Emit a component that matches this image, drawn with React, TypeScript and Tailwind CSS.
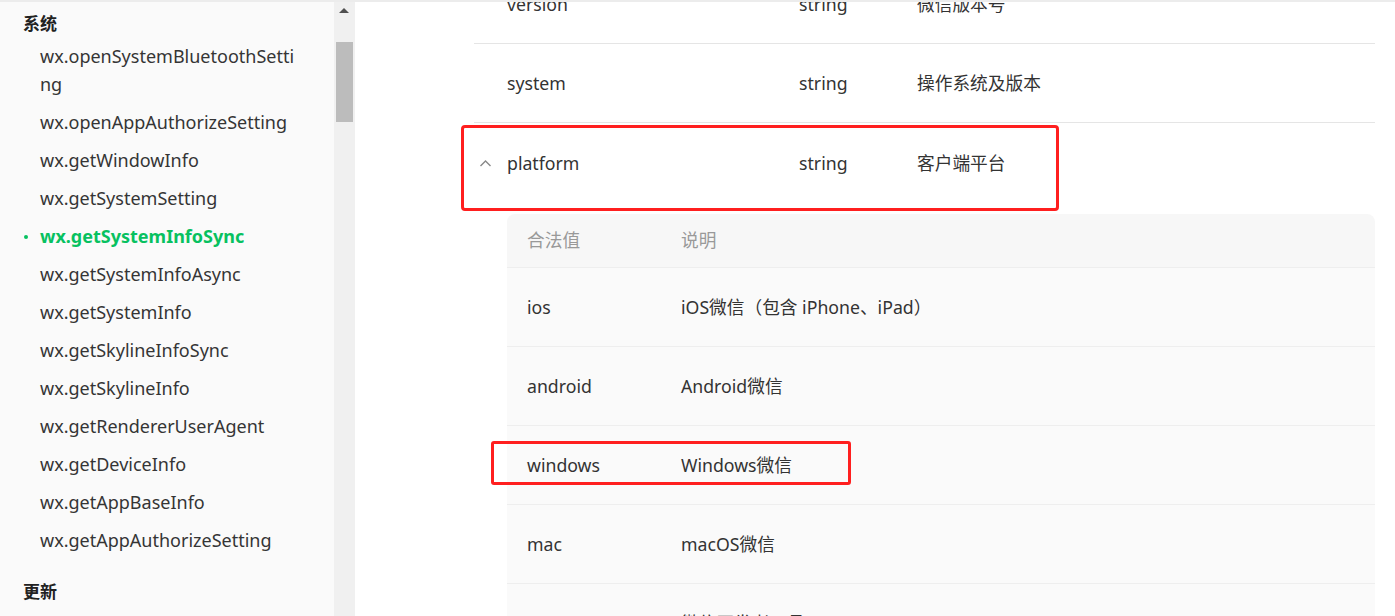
const font = { fontFamily: '"Noto Sans", "Noto Sans CJK SC", sans-serif' };

type NavItem = { label: string; active?: boolean };

const systemItems: NavItem[] = [
  { label: "wx.openSystemBluetoothSetting" },
  { label: "wx.openAppAuthorizeSetting" },
  { label: "wx.getWindowInfo" },
  { label: "wx.getSystemSetting" },
  { label: "wx.getSystemInfoSync", active: true },
  { label: "wx.getSystemInfoAsync" },
  { label: "wx.getSystemInfo" },
  { label: "wx.getSkylineInfoSync" },
  { label: "wx.getSkylineInfo" },
  { label: "wx.getRendererUserAgent" },
  { label: "wx.getDeviceInfo" },
  { label: "wx.getAppBaseInfo" },
  { label: "wx.getAppAuthorizeSetting" },
];

const platformValues = [
  { value: "ios", desc: "iOS微信（包含 iPhone、iPad）" },
  { value: "android", desc: "Android微信" },
  { value: "windows", desc: "Windows微信", marked: true },
  { value: "mac", desc: "macOS微信" },
  { value: "devtools", desc: "微信开发者工具" },
];

export default function App() {
  return (
    <div
      className="flex h-[616px] w-[1395px] overflow-hidden border-t-2 border-[#ececec] bg-white text-[#333]"
      style={font}
    >
      {/* Sidebar */}
      <aside className="w-[334px] shrink-0 overflow-hidden bg-[#fafafa]">
        <div className="pl-[23px] pr-[34px] pt-[8px]">
          <h3 className="text-[17px] font-bold leading-[28px] text-[#222]">系统</h3>
          <ul className="mt-[-1px]">
            {systemItems.map((item) => (
              <li
                key={item.label}
                className={`relative break-all py-[5px] pl-[17px] text-[18px] leading-[28px] ${
                  item.active ? "font-bold text-[#07c160]" : "text-[#353535]"
                }`}
              >
                {item.active && (
                  <span className="absolute left-[1px] top-[18px] h-[4px] w-[4px] rounded-full bg-[#07c160]" />
                )}
                {item.label}
              </li>
            ))}
          </ul>
          <h3 className="mt-[19px] text-[17px] font-bold leading-[28px] text-[#222]">更新</h3>
        </div>
      </aside>

      {/* Scrollbar */}
      <div className="relative w-[21px] shrink-0 bg-[#f0f0f0]">
        <div className="absolute left-[5px] top-[6px] h-0 w-0 border-x-[5px] border-b-[5px] border-x-transparent border-b-[#505050]" />
        <div className="absolute left-[2px] top-[40px] h-[80px] w-[17px] bg-[#bcbcbc]" />
      </div>

      {/* Main content */}
      <main className="flex-1 overflow-hidden pl-[119px] pr-[20px]">
        <div className="mt-[-37px] text-[17.7px]">
          <TableRow name="version" type="string" desc="微信版本号" />
          <TableRow name="system" type="string" desc="操作系统及版本" />

          <div className="relative flex h-[80px] items-center">
            <div className="pointer-events-none absolute left-[-13px] top-[2px] h-[86px] w-[598px] rounded-[4px] border-[3px] border-[#ff1f1f]" />
            <svg className="absolute left-[5px] top-[36px]" width="13" height="8" viewBox="0 0 13 8" fill="none">
              <path d="M1.5 7L6.5 2L11.5 7" stroke="#888" strokeWidth="1.4" />
            </svg>
            <span className="w-[325px] pl-[33px]">platform</span>
            <span className="w-[118px]">string</span>
            <span>客户端平台</span>
          </div>

          <div className="ml-[33px] mt-[11px]">
            <div className="flex h-[54px] items-center rounded-t-[8px] border-b border-[#eeeeee] bg-[#f7f7f7] pl-[20px] text-[#999]">
              <span className="w-[154px]">合法值</span>
              <span>说明</span>
            </div>
            {platformValues.map((row) => (
              <div
                key={row.value}
                className="relative flex h-[79px] items-center border-b border-[#eeeeee] bg-[#fafafa] pl-[20px]"
              >
                {row.marked && (
                  <div className="pointer-events-none absolute left-[-16px] top-[15px] h-[44px] w-[360px] rounded-[3px] border-[3px] border-[#ff1f1f]" />
                )}
                <span className="w-[154px]">{row.value}</span>
                <span>{row.desc}</span>
              </div>
            ))}
          </div>
        </div>
      </main>
    </div>
  );
}

function TableRow({ name, type, desc }: { name: string; type: string; desc: string }) {
  return (
    <div className="flex h-[79px] items-center border-b border-[#e5e5e5]">
      <span className="w-[325px] pl-[33px]">{name}</span>
      <span className="w-[118px]">{type}</span>
      <span>{desc}</span>
    </div>
  );
}
